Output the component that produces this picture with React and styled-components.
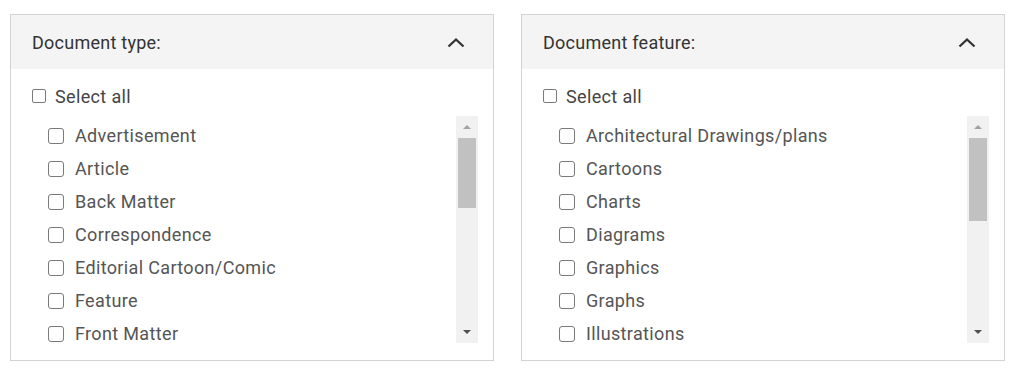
import React from "react";
import styled, { createGlobalStyle } from "styled-components";

const GlobalStyle = createGlobalStyle`
  html, body { margin: 0; padding: 0; background: #ffffff; }
  body { font-family: Roboto, "Noto Sans", "Liberation Sans", sans-serif; }
  * { box-sizing: border-box; }
`;

const Page = styled.div`
  display: grid;
  grid-template-columns: 484px 484px;
  column-gap: 27px;
  padding: 14px 0 0 10px;
`;

const Panel = styled.section`
  border: 1px solid #d3d3d3;
  height: 347px;
  display: flex;
  flex-direction: column;
  background: #fff;
`;

const Header = styled.div`
  height: 54px;
  flex: none;
  background: #f4f4f4;
  display: flex;
  align-items: center;
  justify-content: space-between;
  padding: 0 28px 0 21px;
`;

const Title = styled.span`
  font-size: 18px;
  color: #333;
  letter-spacing: 0.25px;
`;

const Chevron = styled.svg`
  width: 18px;
  height: 11px;
  display: block;
`;

const Body = styled.div`
  flex: 1;
  display: flex;
  flex-direction: column;
  padding: 15px 15px 17px 21px;
  min-height: 0;
`;

const Row = styled.label`
  display: flex;
  align-items: center;
  height: ${(p) => (p.$item ? "33px" : "24px")};
  gap: ${(p) => (p.$item ? "11px" : "9px")};
  font-size: 18px;
  letter-spacing: 0.35px;
  color: ${(p) => (p.$item ? "#555" : "#444")};
  white-space: nowrap;
  flex: none;
`;

const Box = styled.input.attrs({ type: "checkbox" })`
  appearance: none;
  margin: 0;
  flex: none;
  width: ${(p) => (p.$item ? "16px" : "14px")};
  height: ${(p) => (p.$item ? "16px" : "14px")};
  border: 1px solid #7a7a7a;
  border-radius: ${(p) => (p.$item ? "3px" : "2px")};
  background: #fff;
`;

const ListWrap = styled.div`
  margin-top: 8px;
  height: 227px;
  display: flex;
  align-items: stretch;
`;

const List = styled.div`
  flex: 1;
  overflow: hidden;
  padding: 3px 0 0 16px;
  display: flex;
  flex-direction: column;
`;

const Track = styled.div`
  width: 22px;
  flex: none;
  background: #f1f1f1;
  display: flex;
  flex-direction: column;
  align-items: center;
`;

const ArrowBtn = styled.div`
  height: 22px;
  width: 100%;
  display: flex;
  align-items: center;
  justify-content: center;
  flex: none;
  &::before {
    content: "";
    width: 0;
    height: 0;
    border-left: 4px solid transparent;
    border-right: 4px solid transparent;
    ${(p) =>
      p.$down
        ? "border-top: 4px solid #505050;"
        : "border-bottom: 4px solid #a3a3a3;"}
  }
`;

const Spacer = styled.div`
  flex: 1;
  width: 100%;
  padding: 0 2px;
`;

const Thumb = styled.div`
  width: 100%;
  background: #c1c1c1;
`;

const FilterPanel = ({ title, items, thumb }) => (
  <Panel>
    <Header>
      <Title>{title}</Title>
      <Chevron viewBox="0 0 18 11">
        <polyline
          points="1.5,9.5 9,2.5 16.5,9.5"
          fill="none"
          stroke="#333"
          strokeWidth="2.3"
        />
      </Chevron>
    </Header>
    <Body>
      <Row>
        <Box />
        Select all
      </Row>
      <ListWrap>
        <List>
          {items.map((it) => (
            <Row key={it} $item>
              <Box $item />
              {it}
            </Row>
          ))}
        </List>
        <Track>
          <ArrowBtn />
          <Spacer>
            <Thumb style={{ height: thumb }} />
          </Spacer>
          <ArrowBtn $down />
        </Track>
      </ListWrap>
    </Body>
  </Panel>
);

const docTypes = [
  "Advertisement",
  "Article",
  "Back Matter",
  "Correspondence",
  "Editorial Cartoon/Comic",
  "Feature",
  "Front Matter",
];

const docFeatures = [
  "Architectural Drawings/plans",
  "Cartoons",
  "Charts",
  "Diagrams",
  "Graphics",
  "Graphs",
  "Illustrations",
];

export default function App() {
  return (
    <>
      <GlobalStyle />
      <Page>
        <FilterPanel title="Document type:" items={docTypes} thumb={70} />
        <FilterPanel title="Document feature:" items={docFeatures} thumb={83} />
      </Page>
    </>
  );
}
